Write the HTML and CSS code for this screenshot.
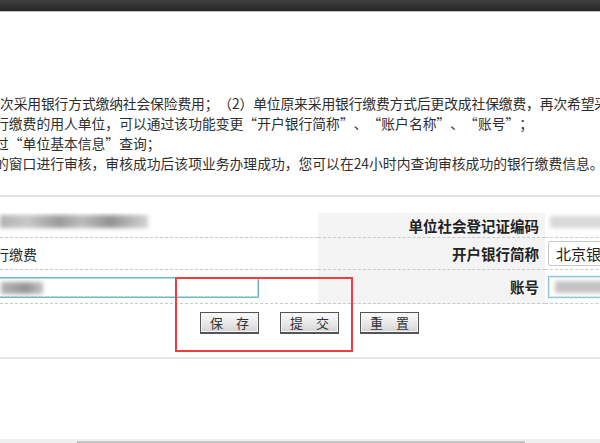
FILE: index.html
```html
<!DOCTYPE html>
<html lang="zh-CN">
<head>
<meta charset="utf-8">
<title>银行缴费信息变更</title>
<link rel="stylesheet" href="styles.css">
</head>
<body>
<div class="page">
  <div class="topbar"></div>
  <main class="content">
    <div class="notes">
      <p class="line first">次采用银行方式缴纳社会保险费用；（2）单位原来采用银行缴费方式后更改成社保缴费，再次希望采用银行方式缴费的</p>
      <p class="line">行缴费的用人单位，可以通过该功能变更“开户银行简称”、“账户名称”、“账号”；</p>
      <p class="line">过“单位基本信息”查询；</p>
      <p class="line">的窗口进行审核，审核成功后该项业务办理成功，您可以在24小时内查询审核成功的银行缴费信息。</p>
    </div>
    <div class="divider"></div>
    <div class="form">
      <div class="cell val r1"><span class="blur blur-name"></span></div>
      <div class="cell label r1">单位社会登记证编码</div>
      <div class="cell val r1"><span class="blur blur-code"></span></div>

      <div class="cell val r2"><span class="clip-text">银行缴费</span></div>
      <div class="cell label r2">开户银行简称</div>
      <div class="cell val r2"><div class="select">北京银行</div></div>

      <div class="cell val r3"><div class="input input-left"><span class="blur blur-acct"></span></div></div>
      <div class="cell label r3">账号</div>
      <div class="cell val r3"><div class="input input-right"><span class="blur blur-no"></span></div></div>
    </div>
    <div class="actions">
      <button class="btn">保　存</button>
      <button class="btn">提　交</button>
      <button class="btn">重　置</button>
    </div>
    <div class="divider bottom"></div>
  </main>
  <div class="hscroll"><div class="thumb"></div></div>
  <div class="callout"></div>
</div>
</body>
</html>
```
FILE: styles.css
```css
html, body {
  margin: 0;
  padding: 0;
  background: #fff;
}
body {
  font-family: "Noto Sans CJK SC", "Liberation Sans", sans-serif;
  color: #2b2b2b;
  overflow: hidden;
  text-spacing-trim: space-all;
}
.page {
  position: relative;
  width: 600px;
  height: 443px;
  display: flex;
  flex-direction: column;
  overflow: hidden;
}
.topbar {
  height: 11px;
  background: linear-gradient(#414141, #262626);
  border-bottom: 1px solid #bdbdbd;
  flex: none;
}
.content {
  flex: 1;
  overflow: hidden;
}
.notes {
  margin-top: 81px;
}
.line {
  margin: 0;
  height: 20px;
  line-height: 20px;
  font-size: 13.8px;
  white-space: nowrap;
  text-indent: -5px;
  color: #2e2e2e;
}
.line.first {
  text-indent: 0;
  letter-spacing: -0.15px;
}
.divider {
  margin-top: 22px;
  height: 2px;
  background: #e2e2e2;
}
.divider.bottom {
  margin-top: 0;
  background: #e6e6e6;
}
.form {
  margin-top: 16px;
  width: 760px;
  display: grid;
  grid-template-columns: 318px 227px 215px;
}
.cell {
  border-bottom: 1px dashed #c9c9c9;
  display: flex;
  align-items: center;
  overflow: hidden;
}
.r1 { height: 24px; }
.r2 { height: 31px; }
.r3 { height: 33px; }
.label {
  background: #f4f4f4;
  justify-content: flex-end;
  padding-right: 6px;
  font-size: 14.5px;
  font-weight: bold;
  color: #222;
}
.val {
  font-size: 14px;
}
.blur {
  display: block;
  filter: blur(2px);
}
.blur-name {
  width: 148px;
  height: 13px;
  margin-top: -8px;
  background: linear-gradient(90deg, #b0b0b0 0%, #c8c8c8 18%, #9a9a9a 40%, #bcbcbc 55%, #929292 75%, #bababa 90%, #d2d2d2 100%);
}
.blur-code {
  width: 120px;
  height: 12px;
  margin-left: 5px;
  margin-top: -6px;
  background: #d9d9d9;
}
.clip-text {
  margin-left: -19px;
  white-space: nowrap;
  color: #2a2a2a;
}
.select {
  margin-left: 3px;
  height: 23px;
  width: 230px;
  flex: none;
  border: 1px solid #c8c8c8;
  border-radius: 2px;
  background: #fff;
  font-size: 15px;
  line-height: 23px;
  padding-left: 7px;
  color: #222;
  white-space: nowrap;
}
.input {
  height: 19px;
  display: flex;
  align-items: center;
  background: #fff;
  flex: none;
}
.input-left {
  margin-left: -40px;
  margin-top: 2px;
  width: 297px;
  border: 1px solid #6fb4c6;
  box-shadow: inset 0 0 0 1px #b8dbe4;
}
.blur-acct {
  margin-left: 40px;
  width: 42px;
  height: 12px;
  background: linear-gradient(90deg, #b4b4b4, #969696 60%, #c4c4c4);
}
.input-right {
  margin-left: 3px;
  width: 230px;
  height: 20px;
  border: 1px solid #8fc6d6;
  box-shadow: 0 0 2px #bfe0ea, inset 0 0 0 1px #d6edf3;
}
.blur-no {
  margin-left: 6px;
  width: 50px;
  height: 12px;
  background: #c4c4c4;
}
.actions {
  height: 53px;
  padding-left: 200px;
  padding-top: 8px;
  box-sizing: border-box;
  display: flex;
  gap: 21px;
  align-items: flex-start;
}
.btn {
  width: 59px;
  height: 22px;
  padding: 0;
  margin: 0;
  font-family: "Noto Sans CJK SC", sans-serif;
  font-size: 13px;
  line-height: 18px;
  color: #333;
  background: linear-gradient(#fbfbfb, #e6e6e6 60%, #d3d3d3);
  border: 1px solid #555;
  border-bottom-width: 2px;
  box-shadow: inset 0 0 0 1px #f4f4f4;
  text-spacing-trim: space-all;
}
.hscroll {
  flex: none;
  height: 4px;
  background: #efefef;
  position: relative;
}
.thumb {
  margin-left: 77px;
  margin-top: 2px;
  width: 448px;
  height: 2px;
  background: #c4c4c4;
}
.callout {
  position: absolute;
  left: 175px;
  top: 277px;
  width: 174px;
  height: 71px;
  border: 2px solid #f43c3c;
  pointer-events: none;
}
```
